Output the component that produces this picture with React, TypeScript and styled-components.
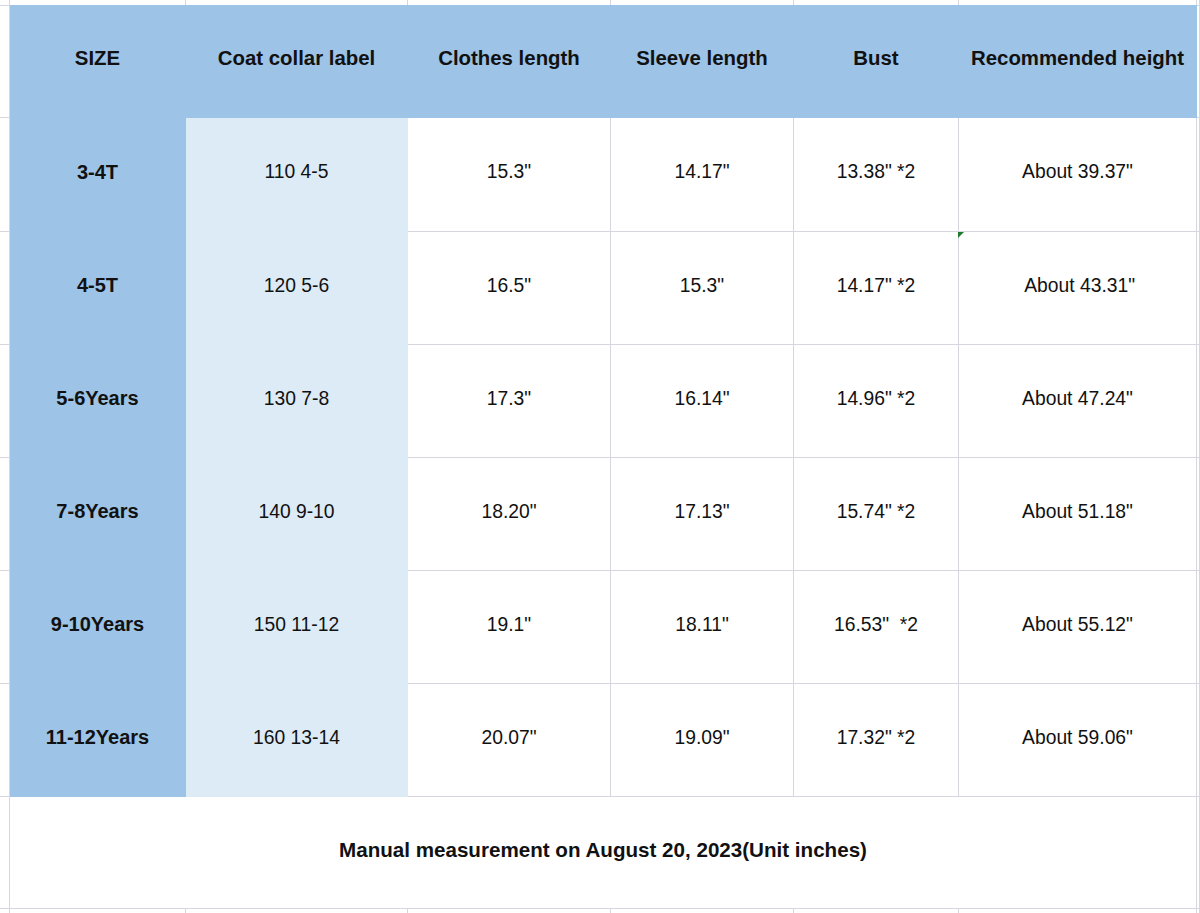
import React from "react";
import styled, { createGlobalStyle, css } from "styled-components";

const GlobalStyle = createGlobalStyle`
  html, body {
    margin: 0;
    padding: 0;
    background: #ffffff;
  }
  body {
    font-family: "Liberation Sans", Arial, sans-serif;
    color: #111111;
  }
`;

const GRID = "#d6d6df";
const HEAD = "#9dc3e6";
const LIGHT = "#ddebf7";

const Sheet = styled.div`
  display: grid;
  grid-template-columns: 10px 176px 222px 203px 183px 165px 238px 1fr;
  grid-template-rows: 5px 113px 114px 113px 113px 113px 113px 113px 112px 1fr;
  width: 1200px;
  height: 913px;
  overflow: hidden;
  background: #ffffff;
`;

type Fill = "none" | "head" | "light";

const Cell = styled.div<{ $fill?: Fill; $bold?: boolean; $span?: number; $size?: number }>`
  position: relative;
  box-sizing: border-box;
  display: flex;
  align-items: center;
  justify-content: center;
  padding-bottom: 5px;
  white-space: pre;
  border-right: 1px solid ${GRID};
  border-bottom: 1px solid ${GRID};
  font-size: ${(p) => p.$size ?? 19.3}px;
  font-weight: ${(p) => (p.$bold ? 700 : 400)};
  ${(p) => p.$span && css`grid-column: span ${p.$span};`}
  ${(p) =>
    p.$fill === "head" &&
    css`
      background: ${HEAD};
      border-color: ${HEAD};
    `}
  ${(p) =>
    p.$fill === "light" &&
    css`
      background: ${LIGHT};
      border-color: ${LIGHT};
    `}
`;

const ErrorMark = styled.span`
  position: absolute;
  top: 0;
  left: -1px;
  width: 0;
  height: 0;
  border-top: 6px solid #1e7a2e;
  border-right: 6px solid transparent;
`;

const headers = [
  "SIZE",
  "Coat collar label",
  "Clothes length",
  "Sleeve length",
  "Bust",
  "Recommended height",
];

const rows: string[][] = [
  ["3-4T", "110 4-5", "15.3\"", "14.17\"", "13.38\" *2", "About 39.37\""],
  ["4-5T", "120 5-6", "16.5\"", "15.3\"", "14.17\" *2", " About 43.31\""],
  ["5-6Years", "130 7-8", "17.3\"", "16.14\"", "14.96\" *2", "About 47.24\""],
  ["7-8Years", "140 9-10", "18.20\"", "17.13\"", "15.74\" *2", "About 51.18\""],
  ["9-10Years", "150 11-12", "19.1\"", "18.11\"", "16.53\"  *2", "About 55.12\""],
  ["11-12Years", "160 13-14", "20.07\"", "19.09\"", "17.32\" *2", "About 59.06\""],
];

const blankRow = (key: string) => (
  <React.Fragment key={key}>
    {Array.from({ length: 8 }).map((_, i) => (
      <Cell key={i} />
    ))}
  </React.Fragment>
);

export default function App() {
  return (
    <>
      <GlobalStyle />
      <Sheet>
        {blankRow("top")}

        <Cell />
        {headers.map((h) => (
          <Cell key={h} $fill="head" $bold $size={20.4}>
            {h}
          </Cell>
        ))}
        <Cell />

        {rows.map((r, ri) => (
          <React.Fragment key={r[0]}>
            <Cell />
            <Cell $fill="head" $bold $size={20}>
              {r[0]}
            </Cell>
            <Cell $fill="light">{r[1]}</Cell>
            <Cell>{r[2]}</Cell>
            <Cell>{r[3]}</Cell>
            <Cell>{r[4]}</Cell>
            <Cell>
              {ri === 1 && <ErrorMark />}
              {r[5]}
            </Cell>
            <Cell />
          </React.Fragment>
        ))}

        <Cell />
        <Cell $span={6} $bold $size={20.6}>
          Manual measurement on August 20, 2023(Unit inches)
        </Cell>
        <Cell />

        {blankRow("bottom")}
      </Sheet>
    </>
  );
}
